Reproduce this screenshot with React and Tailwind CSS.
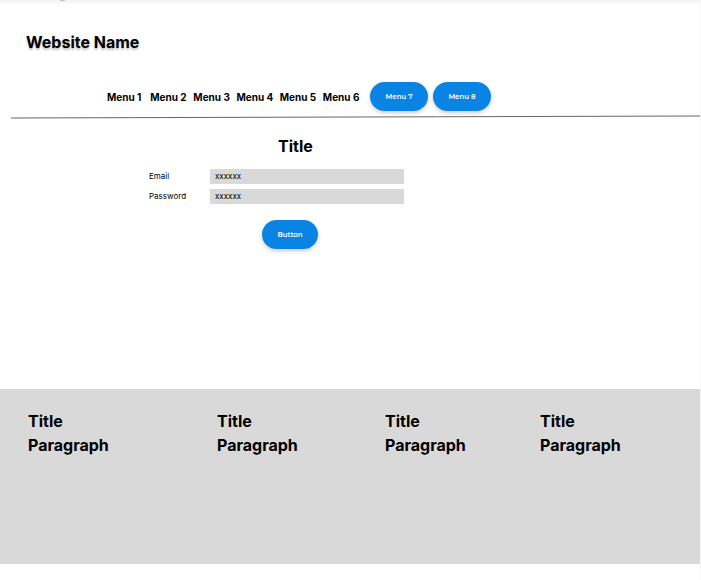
const menuItems = ["Menu 1", "Menu 2", "Menu 3", "Menu 4", "Menu 5", "Menu 6"];
const footerColumns = [1, 2, 3, 4];

function PillButton({ children, type = "button", className = "" }) {
  return (
    <button
      type={type}
      className={`h-[29px] rounded-full bg-[#0a84e4] pt-px text-center font-['Montserrat','Inter',sans-serif] text-[7px] font-semibold text-white shadow-[0_2px_4px_rgba(0,0,0,0.2)] ${className}`}
    >
      {children}
    </button>
  );
}

function Field({ id, label, type }) {
  return (
    <div className="grid grid-cols-[61px_1fr] items-center">
      <label htmlFor={id} className="text-[8px] leading-4">
        {label}
      </label>
      <input
        id={id}
        type={type}
        defaultValue="xxxxxx"
        className="h-[15px] w-full bg-[#d9d9d9] px-[5px] text-[8px] outline-none"
      />
    </div>
  );
}

export default function App() {
  return (
    <div className="flex min-h-screen flex-col border-r border-[#f7f7f7] bg-white font-['Inter',sans-serif] text-black">
      <div className="h-[3px] bg-[#f5f5f5] pl-[60px]">
        <div className="h-px w-[5px] rounded-b-full bg-[#bdbdbd]" />
      </div>
      <header>
        <h1 className="pt-[27px] pl-[26px] text-base leading-6 font-bold [text-shadow:0_2px_2px_rgba(0,0,0,0.25)]">
          Website Name
        </h1>
        <nav className="mt-7 flex items-center pl-[107px]">
          <div className="mr-1 grid w-[259px] grid-cols-6">
            {menuItems.map((item) => (
              <a key={item} href="#" className="text-[10px] leading-4 font-bold whitespace-nowrap">
                {item}
              </a>
            ))}
          </div>
          <div className="flex gap-[5px]">
            <PillButton className="w-[58px]">Menu 7</PillButton>
            <PillButton className="w-[58px]">Menu 8</PillButton>
          </div>
        </nav>
        <div className="mt-1 pl-[11px]">
          <svg className="block h-1 w-full" viewBox="0 0 690 4" preserveAspectRatio="none" aria-hidden="true">
            <line x1="0" y1="3" x2="690" y2="1" stroke="#666" strokeWidth="1" />
          </svg>
        </div>
      </header>
      <main className="grow">
        <form className="ml-[149px] w-[255px] pt-[15px]" onSubmit={(e) => e.preventDefault()}>
          <h2 className="pl-[129px] text-base leading-6 font-bold">Title</h2>
          <div className="mt-[10px] flex flex-col gap-1">
            <Field id="email" label="Email" type="text" />
            <Field id="password" label="Password" type="text" />
          </div>
          <PillButton type="submit" className="mt-4 ml-[113px] w-14">
            Button
          </PillButton>
        </form>
      </main>
      <footer className="mb-4 grid min-h-[175px] grid-cols-[189fr_168fr_155fr_160fr] bg-[#d9d9d9] pt-5 pl-7">
        {footerColumns.map((column) => (
          <section key={column} className="text-base leading-6 font-bold">
            <h2>Title</h2>
            <p>Paragraph</p>
          </section>
        ))}
      </footer>
    </div>
  );
}
